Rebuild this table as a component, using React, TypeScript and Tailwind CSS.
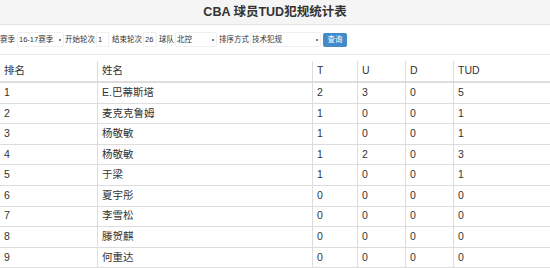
import React from 'react';

const rows = [
  { rank: 1, name: 'E.巴蒂斯塔', t: 2, u: 3, d: 0, tud: 5 },
  { rank: 2, name: '麦克克鲁姆', t: 1, u: 0, d: 0, tud: 1 },
  { rank: 3, name: '杨敬敏', t: 1, u: 0, d: 0, tud: 1 },
  { rank: 4, name: '杨敬敏', t: 1, u: 2, d: 0, tud: 3 },
  { rank: 5, name: '于梁', t: 1, u: 0, d: 0, tud: 1 },
  { rank: 6, name: '夏宇彤', t: 0, u: 0, d: 0, tud: 0 },
  { rank: 7, name: '李雪松', t: 0, u: 0, d: 0, tud: 0 },
  { rank: 8, name: '滕贺麒', t: 0, u: 0, d: 0, tud: 0 },
  { rank: 9, name: '何重达', t: 0, u: 0, d: 0, tud: 0 },
];

const font = { fontFamily: '"Liberation Sans", "Noto Sans CJK SC", sans-serif' };

function FakeSelect({ value, width }: { value: string; width: string }) {
  return (
    <div className={`flex h-[15px] items-center justify-between rounded-[2px] border border-[#f0f0f0] bg-white pl-[1px] pr-[2px] ${width}`}>
      <span>{value}</span>
      <span className="h-[2px] w-[2px] rounded-full bg-[#555]" />
    </div>
  );
}

export default function App() {
  const cols = 'grid grid-cols-[97px_215px_45px_48px_48px_1fr]';
  return (
    <div className="h-[268px] w-[550px] overflow-hidden bg-white text-[#333]" style={font}>
      {/* Title */}
      <div className="flex h-[25px] items-center justify-center border-b border-[#e3e3e3] bg-[#f5f5f5]">
        <h1 className="text-[12.5px] font-bold text-[#333]">CBA 球员TUD犯规统计表</h1>
      </div>

      {/* Filter form */}
      <div className="flex h-[30px] items-center border-b border-[#e8e8e8] text-[7.5px] text-[#333]">
        <span className="mr-[2px]">赛季</span>
        <FakeSelect value="16-17赛季" width="w-[47px]" />
        <span className="ml-[1px] mr-[1px]">开始轮次</span>
        <div className="flex h-[15px] w-[13px] items-center border border-[#f0f0f0] bg-white pl-[1px]">1</div>
        <span className="ml-[3px] mr-[1px]">结束轮次</span>
        <div className="flex h-[15px] w-[14px] items-center border border-[#f0f0f0] bg-white pl-[1px]">26</div>
        <span className="ml-[2px] mr-[1px]">球队</span>
        <FakeSelect value="北控" width="w-[42px]" />
        <span className="ml-[2px] mr-[1px]">排序方式</span>
        <FakeSelect value="技术犯规" width="w-[71px]" />
        <button className="ml-[2px] h-[14px] w-[24px] rounded-[2px] bg-[#428bca] text-[7.5px] text-white">查询</button>
      </div>

      {/* Table */}
      <div className="mt-[6px] text-[10.5px]">
        <div className={`${cols} h-[22px] items-center border-b-2 border-[#ddd]`}>
          {['排名', '姓名', 'T', 'U', 'D', 'TUD'].map((h, i) => (
            <div key={h} className={`flex h-full items-center pl-[4px] ${i > 0 ? 'border-l border-[#ddd]' : ''}`}>
              {h}
            </div>
          ))}
        </div>
        {rows.map((r) => (
          <div key={r.rank} className={`${cols} h-[20.6px] border-b border-[#ddd]`}>
            {[r.rank, r.name, r.t, r.u, r.d, r.tud].map((v, i) => (
              <div key={i} className={`flex h-full items-center pl-[4px] ${i > 0 ? 'border-l border-[#ddd]' : ''}`}>
                {v}
              </div>
            ))}
          </div>
        ))}
      </div>
    </div>
  );
}
